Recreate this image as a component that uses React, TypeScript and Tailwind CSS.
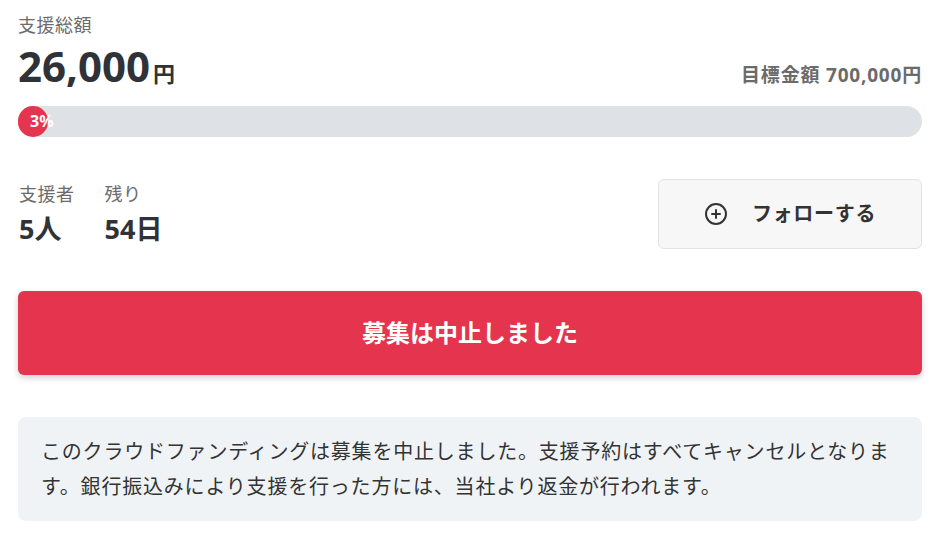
import React from "react"

function PlusCircle() {
  return (
    <svg width="24" height="24" viewBox="0 0 24 24" fill="none" stroke="#333" strokeWidth="2" strokeLinecap="round">
      <circle cx="12" cy="12" r="10" />
      <path d="M12 8v8M8 12h8" />
    </svg>
  )
}

export default function App() {
  const pct = 3
  return (
    <div
      className="w-[947px] h-[540px] bg-white px-[18px] pt-[12px] text-[#333]"
      style={{ fontFamily: '"Noto Sans", "Noto Sans CJK JP", sans-serif' }}
    >
      <div className="w-[904px]">
        <div className="text-[18px] leading-[26px] text-[#6b6b6b] tracking-[0.5px]">支援総額</div>
        <div className="flex items-end justify-between mt-[2px]">
          <div className="flex items-baseline">
            <span className="text-[42px] leading-[52px] font-bold text-[#2f3338]">26,000</span>
            <span className="text-[22px] font-bold ml-[3px] text-[#2f3338]">円</span>
          </div>
          <div className="text-[19px] font-bold text-[#6b6b6b] mb-[3px] tracking-[0.8px]">目標金額 700,000円</div>
        </div>
        <div className="relative mt-[14px] h-[31px] w-[904px] rounded-full bg-[#dee1e5]">
          <div
            className="h-full rounded-full bg-[#e5344e] min-w-[30px]"
            style={{ width: `${pct}%` }}
          />
          <span className="absolute left-[12px] top-[4px] text-[16px] leading-[22px] font-bold text-white">{pct}%</span>
        </div>
        <div className="flex items-center justify-between mt-[42px]">
          <div className="flex gap-[30px] pl-[1px]">
            <div>
              <div className="text-[18px] leading-[26px] text-[#6b6b6b] tracking-[0.5px]">支援者</div>
              <div className="text-[27px] leading-[36px] font-bold mt-[4px] text-[#2f3338]">5人</div>
            </div>
            <div>
              <div className="text-[18px] leading-[26px] text-[#6b6b6b] tracking-[0.5px]">残り</div>
              <div className="text-[27px] leading-[36px] font-bold mt-[4px] text-[#2f3338]">54日</div>
            </div>
          </div>
          <button className="w-[264px] h-[70px] rounded-[6px] border border-[#e3e3e3] bg-[#f7f7f7] flex items-center justify-center gap-[24px] text-[20px] font-bold text-[#333] tracking-[0.7px]">
            <PlusCircle />
            <span>フォローする</span>
          </button>
        </div>
        <button className="mt-[42px] w-[904px] h-[84px] rounded-[6px] bg-[#e5344e] text-white text-[24px] font-bold shadow-[0_3px_6px_rgba(0,0,0,0.18)]">
          募集は中止しました
        </button>
        <div className="mt-[42px] w-[904px] rounded-[8px] bg-[#f0f3f6] px-[23px] py-[17px] text-[20px] leading-[35px] tracking-[0.8px] text-[#333]">
          このクラウドファンディングは募集を中止しました。支援予約はすべてキャンセルとなります。銀行振込みにより支援を行った方には、当社より返金が行われます。
        </div>
      </div>
    </div>
  )
}
